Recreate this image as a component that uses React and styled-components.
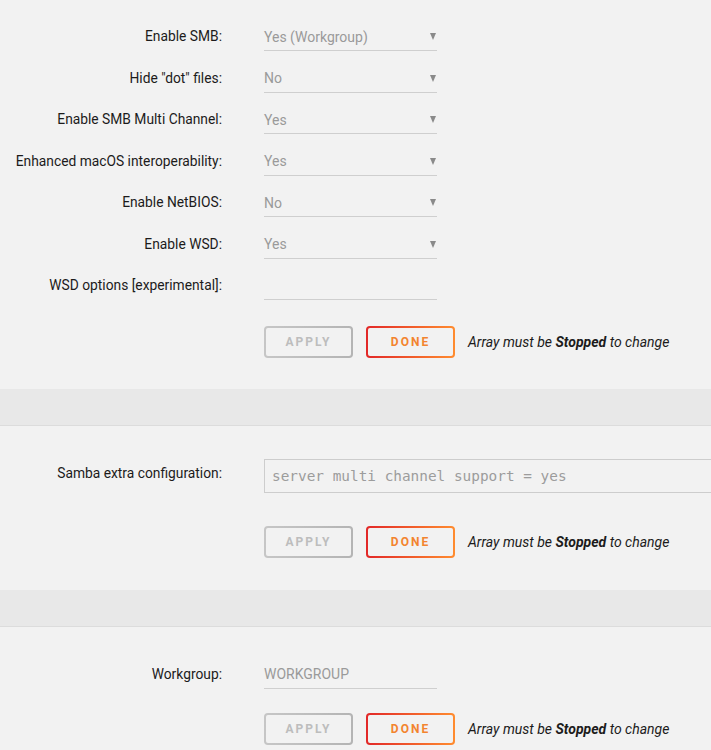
import React from "react";
import styled, { createGlobalStyle } from "styled-components";

const Global = createGlobalStyle`
  html, body { margin: 0; padding: 0; background: #f2f2f2; }
  body { font-family: Roboto, "Liberation Sans", sans-serif; color: #1c1b1b; }
`;

const Page = styled.div`
  width: 711px;
  overflow: hidden;
`;

const Section = styled.section`
  background: #f2f2f2;
  padding: ${(p) => p.$pad || "22px 0 32px"};
`;

const Band = styled.div`
  height: 36px;
  background: #e8e8e8;
  border-bottom: 1px solid #dcdcdc;
`;

const Row = styled.div`
  display: grid;
  grid-template-columns: 222px auto;
  column-gap: 42px;
  align-items: start;
  height: ${(p) => p.$h || "auto"};
`;

const Label = styled.div`
  text-align: right;
  font-size: 13.8px;
  line-height: ${(p) => p.$lh || 29}px;
  white-space: nowrap;
`;

const Field = styled.div`
  position: relative;
  width: 173px;
  height: 29px;
  border-bottom: 1px solid #cfcfcf;
  box-sizing: border-box;
  font-size: 14px;
  color: #9a9a9a;
  display: flex;
  align-items: center;
  padding-top: 1px;
`;

const Arrow = styled.span`
  position: absolute;
  right: 1px;
  top: 11px;
  width: 0;
  height: 0;
  border-left: 3.5px solid transparent;
  border-right: 3.5px solid transparent;
  border-top: 7px solid #8a8a8a;
`;

const TextArea = styled.div`
  width: 460px;
  height: 34px;
  box-sizing: border-box;
  border: 1px solid #cdcdcd;
  padding: 0 7px;
  display: flex;
  align-items: center;
  font-family: "DejaVu Sans Mono", "Liberation Mono", monospace;
  font-size: 14.4px;
  color: #9c9c9c;
  white-space: nowrap;
`;

const Actions = styled.div`
  display: flex;
  align-items: center;
  gap: 13px;
  margin: ${(p) => p.$mt || 0}px 0 0 264px;
`;

const Button = styled.div`
  width: 89px;
  height: 32px;
  box-sizing: border-box;
  border: 2px solid transparent;
  border-radius: 4px;
  background: linear-gradient(#f2f2f2, #f2f2f2) padding-box,
    ${(p) =>
      p.$done
        ? "linear-gradient(90deg, #e22828, #ff8c2f)"
        : "linear-gradient(90deg, #c6c6c6, #b4b4b4)"}
      border-box;
  display: flex;
  align-items: center;
  justify-content: center;
  font-size: 12px;
  font-weight: 700;
  letter-spacing: 2px;
  color: ${(p) => (p.$done ? "#f3842f" : "#bdbdbd")};
  text-transform: uppercase;
`;

const Note = styled.span`
  font-style: italic;
  font-size: 14px;
  color: #1c1b1b;
  b { font-weight: 700; }
`;

const rows = [
  ["Enable SMB:", "Yes (Workgroup)", true],
  ['Hide "dot" files:', "No", true],
  ["Enable SMB Multi Channel:", "Yes", true],
  ["Enhanced macOS interoperability:", "Yes", true],
  ["Enable NetBIOS:", "No", true],
  ["Enable WSD:", "Yes", true],
  ["WSD options [experimental]:", "", false],
];

function ActionRow({ mt }) {
  return (
    <Actions $mt={mt}>
      <Button>Apply</Button>
      <Button $done>Done</Button>
      <Note>
        Array must be <b>Stopped</b> to change
      </Note>
    </Actions>
  );
}

export default function App() {
  return (
    <Page>
      <Global />
      <Section $pad="22px 0 31px">
        {rows.map(([label, value, sel]) => (
          <Row key={label} $h="41.5px">
            <Label>{label}</Label>
            <Field>
              {value}
              {sel && <Arrow />}
            </Field>
          </Row>
        ))}
        <ActionRow mt={13} />
      </Section>
      <Band />
      <Section $pad="33px 0 32px">
        <Row>
          <Label $lh={28}>Samba extra configuration:</Label>
          <TextArea>server multi channel support = yes</TextArea>
        </Row>
        <ActionRow mt={33} />
      </Section>
      <Band />
      <Section $pad="33px 0 5px">
        <Row>
          <Label>Workgroup:</Label>
          <Field>WORKGROUP</Field>
        </Row>
        <ActionRow mt={24} />
      </Section>
    </Page>
  );
}
